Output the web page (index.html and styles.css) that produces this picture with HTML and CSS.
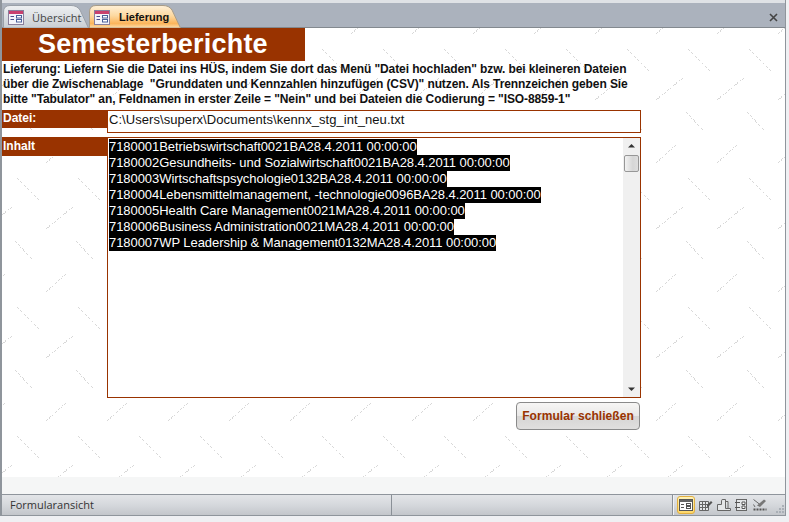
FILE: index.html
```html
<!DOCTYPE html>
<html lang="de">
<head>
<meta charset="utf-8">
<title>Lieferung</title>
<link rel="stylesheet" href="styles.css">
</head>
<body>
<svg class="defs" width="0" height="0" aria-hidden="true">
  <symbol id="form" viewBox="0 0 16 15">
    <rect x="0.5" y="0.5" width="15" height="14" fill="#f4f4fa" stroke="#8a7f9c"/>
    <rect x="1" y="1" width="14" height="3" fill="#c8406e"/>
    <path d="M2.5 6.5H6M2.5 9.5H6" stroke="#4a4f8a" fill="none"/>
    <rect x="8.5" y="5.5" width="5" height="2.5" fill="#fff" stroke="#4a5f9a"/>
    <rect x="8.5" y="9.5" width="5" height="2.5" fill="#fff" stroke="#4a5f9a"/>
  </symbol>
</svg>
<div class="app">
  <div class="tabstrip">
    <div class="tab tab-off">
      <svg class="tab-shape" width="86" height="23" viewBox="0 0 86 23"><path d="M0.5 23V7Q0.5 0.5 7 0.5H68Q74 0.5 77 5L85.5 23Z" fill="url(#offg)" stroke="#9aa0a8"/><defs><linearGradient id="offg" x1="0" y1="0" x2="0" y2="1"><stop offset="0" stop-color="#eef0f2"/><stop offset="1" stop-color="#c9ced4"/></linearGradient></defs></svg>
      <svg class="tab-icon" width="16" height="15"><use href="#form"/></svg>
      <span class="tab-label">Übersicht</span>
    </div>
    <div class="tab tab-on">
      <svg class="tab-shape" width="92" height="23" viewBox="0 0 92 23"><path d="M0.5 23V7Q0.5 0.5 7 0.5H74Q80 0.5 83 5L91.5 23Z" fill="url(#ong)" stroke="#a89c88"/><defs><linearGradient id="ong" x1="0" y1="0" x2="0" y2="1"><stop offset="0" stop-color="#fff0d8"/><stop offset="0.45" stop-color="#fdd9a0"/><stop offset="0.8" stop-color="#fbb55c"/><stop offset="1" stop-color="#fde0b0"/></linearGradient></defs></svg>
      <svg class="tab-icon" width="16" height="15"><use href="#form"/></svg>
      <span class="tab-label">Lieferung</span>
    </div>
    <svg class="close" width="9" height="9" viewBox="0 0 9 9"><path d="M1 1L8 8M8 1L1 8" stroke="#444" stroke-width="1.6" fill="none"/></svg>
  </div>
  <main class="pane">
    <div class="form">
      <h1 class="title">Semesterberichte</h1>
      <p class="intro">Lieferung: Liefern Sie die Datei ins HÜS, indem Sie dort das Menü "Datei hochladen" bzw. bei kleineren Dateien<br>über die Zwischenablage &nbsp;"Grunddaten und Kennzahlen hinzufügen (CSV)" nutzen. Als Trennzeichen geben Sie<br>bitte "Tabulator" an, Feldnamen in erster Zeile = "Nein" und bei Dateien die Codierung = "ISO-8859-1"</p>
      <div class="row row-file">
        <div class="label label-file">Datei:</div>
        <div class="field">C:\Users\superx\Documents\kennx_stg_int_neu.txt</div>
      </div>
      <div class="row row-content">
        <div class="label label-content">Inhalt</div>
        <div class="listbox">
          <div class="lines">
            <span class="sel">7180001Betriebswirtschaft0021BA28.4.2011 00:00:00</span>
            <span class="sel">7180002Gesundheits- und Sozialwirtschaft0021BA28.4.2011 00:00:00</span>
            <span class="sel">7180003Wirtschaftspsychologie0132BA28.4.2011 00:00:00</span>
            <span class="sel">7180004Lebensmittelmanagement, -technologie0096BA28.4.2011 00:00:00</span>
            <span class="sel">7180005Health Care Management0021MA28.4.2011 00:00:00</span>
            <span class="sel">7180006Business Administration0021MA28.4.2011 00:00:00</span>
            <span class="sel">7180007WP Leadership &amp; Management0132MA28.4.2011 00:00:00</span>
          </div>
          <div class="scrollbar">
            <svg class="arrow" width="17" height="14" viewBox="0 0 17 14"><path d="M5 9.5L8.5 6L12 9.5Z" fill="#333"/></svg>
            <div class="thumb"></div>
            <div class="track"></div>
            <svg class="arrow" width="17" height="14" viewBox="0 0 17 14"><path d="M5 4.5L8.5 8L12 4.5Z" fill="#333"/></svg>
          </div>
        </div>
      </div>
      <div class="actions"><button class="btn" type="button">Formular schließen</button></div>
    </div>
  </main>
  <div class="pane-foot"></div>
  <footer class="status">
    <span class="status-text">Formularansicht</span>
    <span class="status-mid"></span>
    <div class="views">
      <span class="view view-on"><svg width="14" height="12" viewBox="0 0 14 12"><rect x="0.5" y="0.5" width="13" height="11" fill="#fff" stroke="#555"/><rect x="1" y="1" width="12" height="2" fill="#666"/><path d="M2 5.5H5M2 8.5H5" stroke="#555"/><rect x="7.5" y="4.5" width="4" height="2" fill="#fff" stroke="#555"/><rect x="7.5" y="7.5" width="4" height="2" fill="#fff" stroke="#555"/></svg></span>
      <span class="view"><svg width="14" height="12" viewBox="0 0 14 12"><path d="M0.5 2.5H9.5V11.5H0.5ZM3.5 2.5V11.5M6.5 2.5V11.5M0.5 5.5H9.5M0.5 8.5H9.5" fill="#e4e6e8" stroke="#666"/><path d="M8 6L12 2L13.5 3.5L9.5 7.5L8 8Z" fill="#555"/></svg></span>
      <span class="view"><svg width="14" height="12" viewBox="0 0 14 12"><path d="M0.5 5.5H4.5V1.5Q4.5 0.5 6 0.5H8.5V9.5H13.5V11.5H0.5Z M8.5 2.5H11V9.5" fill="#e4e6e8" stroke="#666"/></svg></span>
      <span class="view"><svg width="14" height="12" viewBox="0 0 14 12"><rect x="1.5" y="0.5" width="10" height="11" fill="#e4e6e8" stroke="#666"/><path d="M0 3.5H5M0 8.5H5M7 3H10V5.5H7ZM7 7H10V9.5H7Z" fill="#fff" stroke="#555"/></svg></span>
      <span class="view"><svg width="14" height="12" viewBox="0 0 14 12"><path d="M0.5 0.5L7 5.5M0.5 5.5L2 8" stroke="#666" fill="none"/><path d="M4 6.5L11 0.5L13 2L7 8Z" fill="#777"/><path d="M0.5 10.5H13.5" stroke="#555" stroke-width="2" stroke-dasharray="2 1"/></svg></span>
    </div>
    <svg class="grip" width="11" height="11" viewBox="0 0 11 11"><path d="M8 1h2v2H8zM5 4h2v2H5zM8 4h2v2H8zM2 7h2v2H2zM5 7h2v2H5zM8 7h2v2H8z" fill="#a9afb6"/></svg>
  </footer>
</div>
</body>
</html>
```
FILE: styles.css
```css
* { box-sizing: border-box; }
html, body { margin: 0; padding: 0; }
body { width: 789px; height: 522px; overflow: hidden; background: #eff0f3; font-family: "Liberation Sans", Arial, sans-serif; }
.defs { position: absolute; }
.app { display: flex; flex-direction: column; width: 786px; height: 516px; border-left: 2px solid #8f959c; border-right: 1px solid #8f959c; }

.tabstrip { display: flex; align-items: flex-end; height: 28px; padding: 5px 0 0 1px; border-top: 3px solid #dfe2e6; background: #abb2bd; border-bottom: 1px solid #83898f; gap: 1px; }
.tab { position: relative; display: flex; align-items: center; height: 22px; margin-bottom: -1px; font-family: "Open Sans", sans-serif; font-size: 11px; }
.tab-shape { position: absolute; left: 0; top: -1px; }
.tab-icon, .tab-label { position: relative; }
.tab-off { width: 85px; padding-left: 5px; color: #444; }
.tab-off .tab-label { margin-left: 8px; }
.tab-on { width: 91px; padding-left: 5px; color: #111; font-weight: 700; }
.tab-on .tab-label { margin-left: 9px; font-family: "Liberation Sans", sans-serif; }
.close { margin-left: auto; margin-right: 7px; align-self: center; }

.pane { flex: 1; background-color: #fff; background-position: -2px -27px; background-image: url("data:image/svg+xml,%3Csvg xmlns='http://www.w3.org/2000/svg' width='61' height='129' shape-rendering='crispEdges'%3E%3Cg stroke='%23d8d8d8' stroke-dasharray='1 1' fill='none'%3E%3Cpath d='M17 48L40 71M15 111L40 138M46 99L74 76M46 33L66 15M-15 99L13 76M-15 33L5 15'/%3E%3C/g%3E%3C/svg%3E"); }
.form { display: flex; flex-direction: column; width: 639px; }
.title { margin: 0; width: 303px; height: 33px; background: #993300; color: #fff; font-size: 27px; line-height: 33px; font-weight: 700; padding-left: 36px; letter-spacing: 0.2px; }
.intro { margin: 0; padding: 1px 0 0 1px; height: 49px; font-size: 12px; line-height: 15px; font-weight: 700; color: #111; white-space: nowrap; letter-spacing: -0.1px; }
.row { display: flex; align-items: flex-start; }
.row-file { height: 27px; }
.label { width: 105px; background: #993300; color: #fff; font-size: 12px; font-weight: 700; line-height: 15px; padding: 1px 0 0 1px; }
.label-file { height: 18px; }
.label-content { height: 19px; padding-top: 2px; }
.field { width: 534px; height: 23px; background: #fff; border: 1px solid #993300; font-size: 13px; line-height: 18px; padding-left: 1px; color: #111; letter-spacing: 0.06px; }
.row-content { height: 261px; }
.listbox { display: flex; width: 534px; height: 261px; background: #fff; border: 1px solid #993300; }
.lines { flex: 1; display: flex; flex-direction: column; align-items: flex-start; padding: 1px 0 0 1px; font-size: 13px; line-height: 16px; letter-spacing: -0.06px; }
.sel { background: #000; color: #fff; white-space: nowrap; display: block; height: 16px; }
.scrollbar { display: flex; flex-direction: column; align-items: center; width: 17px; background: #f0f0f0; }
.arrow { flex: none; }
.thumb { flex: none; width: 15px; height: 17px; margin-top: 3px; border: 1px solid #979797; border-radius: 2px; background: linear-gradient(90deg, #f2f2f2, #d6d6d6 60%, #dedede); }
.track { flex: 1; }
.actions { display: flex; justify-content: flex-end; padding: 4px 1px 0 0; }
.btn { width: 124px; height: 28px; padding: 0; border: 1px solid #8a8a8a; border-radius: 4px; background: linear-gradient(#f7f6f5, #e9e8e7 48%, #d6d5d4 52%, #e0dfde); color: #993300; font-family: "Liberation Sans", sans-serif; font-size: 12px; font-weight: 700; letter-spacing: 0.05px; }

.pane-foot { flex: none; height: 17px; background: #f5f6f6; }
.status { flex: none; display: flex; align-items: center; height: 22px; border-top: 1px solid #8f959c; border-bottom: 1px solid #8f959c; background: linear-gradient(#e3e5e8, #d5d8dc 50%, #c3c6cb); font-family: "Open Sans", sans-serif; font-size: 11px; color: #333; }
.status-text { width: 390px; height: 100%; padding-left: 8px; line-height: 20px; border-right: 1px solid #8a9097; }
.status-mid { flex: 1; height: 100%; border-right: 1px solid #8a9097; box-shadow: 1px 0 0 #f2f3f4; }
.views { display: flex; align-items: center; gap: 4px; margin-left: 4px; }
.view { display: flex; align-items: center; justify-content: center; width: 14px; height: 18px; }
.view-on { width: 18px; border: 1px solid #e2b040; border-radius: 3px; background: linear-gradient(#fff3b8, #ffd86a); }
.grip { margin-left: 7px; align-self: flex-end; }
```
